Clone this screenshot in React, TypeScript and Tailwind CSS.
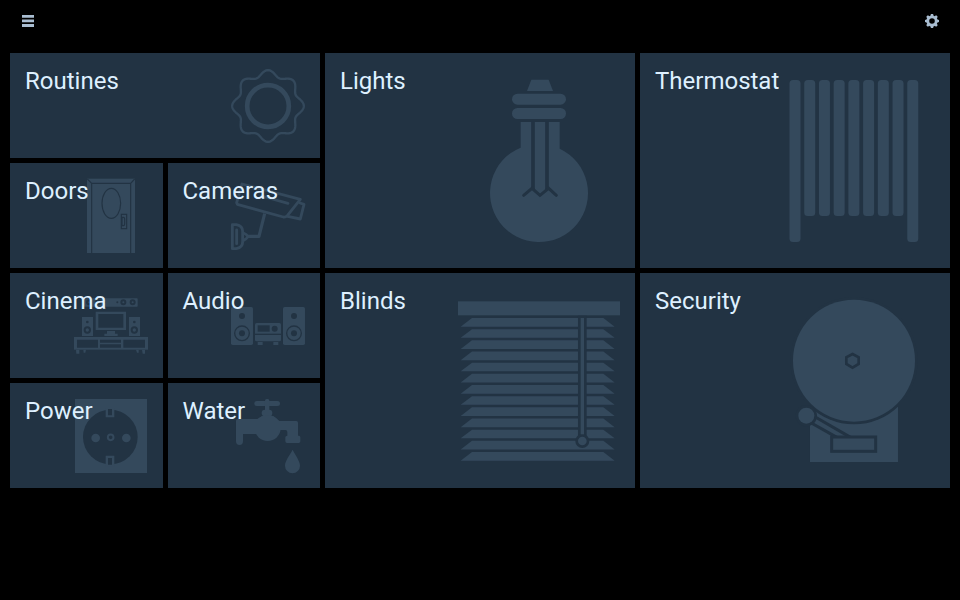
import type { ReactNode } from "react";

const DARK = "#223343";
const TINT = "#34495c";

const wave = (() => {
  const pts: string[] = [];
  for (let i = 0; i < 240; i++) {
    const a = (i / 240) * Math.PI * 2;
    const r = 98.5 + 9 * Math.cos(8 * a);
    pts.push(`${(144 + r * Math.cos(a)).toFixed(1)} ${(138 + r * Math.sin(a)).toFixed(1)}`);
  }
  return "M" + pts.join("L") + "Z";
})();

function Routines() {
  return (
    <g fill="none" stroke={TINT}>
      <circle cx="144" cy="138" r="62.500" strokeWidth="14" />
      <path d={wave} strokeWidth="7" />
    </g>
  );
}

function Door() {
  return (
    <g fill="none" stroke={DARK} strokeWidth="3.500">
      <rect x="51" y="41" width="144" height="223" fill={TINT} stroke="none" />
      <path d="M65 264V55H182V264M52 42L65 55M194 42L182 55" />
      <ellipse cx="124" cy="115" rx="28" ry="45" />
      <rect x="154" y="148" width="16" height="43" />
      <path d="M156 157H160Q164 157 164 162V177Q164 182 160 182H156Z" />
    </g>
  );
}

function Camera() {
  return (
    <g fill="none" stroke={TINT} strokeWidth="8.500" strokeLinejoin="round" strokeLinecap="round">
      <path d="M66 42L241 88L202 137Q197 142 190 141L52 103L50 98Z" />
      <path d="M125 78L204 100M240 99L252 103L241 147L203 139" />
      <path d="M134 131L117 199H80" strokeLinecap="butt" strokeWidth="9.500" />
      <path d="M37 164H49Q68 168 68 184V215Q68 232 49 236H37Z" />
      <path d="M50 180V221" />
      <path d="M70 189Q80 193 84 200Q80 207 70 211" />
    </g>
  );
}

function Cinema() {
  return (
    <g fill={TINT}>
      <rect x="72" y="40" width="161" height="25" rx="2" />
      <path fillRule="evenodd" d="M107 80H198V135H107ZM115 87V128H190V87Z" />
      <path d="M141 138H165V146H173V153H133V146H141Z" />
      <rect x="66" y="96" width="33" height="57" />
      <rect x="207" y="96" width="33" height="57" />
      <rect x="42" y="156" width="222" height="38" />
      <path d="M48 194H58V206H49ZM70 194H78L76 203H71ZM228 194H236V203H231ZM246 194H255V206H248Z" />
      <g fill={DARK}>
        <circle cx="82" cy="111" r="4" />
        <circle cx="223" cy="111" r="4" />
        <path d="M51 164H114V188H51ZM120 164H183V173H120ZM120 178H183V188H120ZM190 164H255V188H190Z" />
        <circle cx="172" cy="52" r="3" />
        <circle cx="133" cy="52" r="3" />
      </g>
      <g fill="none" stroke={DARK} strokeWidth="6">
        <circle cx="82" cy="135" r="8" />
        <circle cx="223" cy="135" r="8" />
        <circle cx="190" cy="52" r="6" />
        <circle cx="218" cy="52" r="6" />
        <circle cx="87" cy="52" r="6" />
        <circle cx="115" cy="52" r="6" />
      </g>
    </g>
  );
}

function Audio() {
  return (
    <g fill={TINT}>
      {[33, 189].map((x) => (
        <g key={x}>
          <rect x={x} y="51" width="66" height="114" rx="5" />
          <circle cx={x + 33} cy="78" r="9" fill={DARK} />
          <circle cx={x + 33} cy="130" r="9" fill={DARK} />
          <circle cx={x + 33} cy="130" r="22" fill="none" stroke={DARK} strokeWidth="4" />
        </g>
      ))}
      <rect x="105" y="99" width="78" height="55" rx="5" />
      <path d="M113 156H128V165H113ZM160 156H175V165H160Z" />
      <g fill={DARK}>
        <rect x="105" y="131" width="78" height="4" />
        <rect x="113" y="106" width="36" height="19" />
        <circle cx="164" cy="116" r="9" />
      </g>
    </g>
  );
}

function Power() {
  return (
    <g fill={TINT}>
      <rect x="30" y="27" width="216" height="222" />
      <circle cx="136" cy="141" r="82" fill={DARK} />
      <circle cx="92" cy="144" r="13" />
      <circle cx="184" cy="144" r="13" />
      <circle cx="137" cy="142" r="8.500" fill="none" stroke={TINT} strokeWidth="6" />
      <path d="M122 54H148V82H122ZM122 197H148V229H122Z" />
      <path d="M129 57H141V76H129ZM129 204H141V224H129Z" fill={DARK} />
    </g>
  );
}

function Water() {
  return (
    <g fill={TINT}>
      <rect x="88" y="33" width="77" height="15" rx="7.500" />
      <rect x="120" y="27" width="13" height="40" rx="5" />
      <rect x="110" y="59" width="32" height="20" rx="10" />
      <circle cx="128" cy="114" r="39" />
      <path d="M33 92Q33 87 38 87H97L110 79H146L163 93H214Q219 93 219 98V137H222Q226 137 226 142V154Q226 159 221 159H186Q181 159 181 154V142Q181 137 187 137V126Q187 120 181 120H160V132H54V154Q54 165 43.500 165Q33 165 33 154Z" />
      <path d="M203 179C210 195 225 212 225 227A22.500 22.500 0 0 1 180 227C180 212 195 195 203 179Z" />
    </g>
  );
}

function Bulb() {
  return (
    <g fill={TINT}>
      <path d="M154 44H206L219 78H141Z" />
      <rect x="96" y="86" width="162" height="33" rx="16.500" />
      <rect x="96" y="129" width="162" height="33" rx="16.500" />
      <path d="M122 171H239V251A147 147 0 1 1 122 248Z" />
      <g fill="none" stroke={DARK} strokeWidth="11">
        <path d="M159 170V374M201 170V374" />
        <path d="M131 391L156 370L180 391L206 370L229 391" strokeLinecap="round" strokeWidth="9" />
      </g>
    </g>
  );
}

function Radiator() {
  return (
    <g fill={TINT}>
      {[0, 1, 2, 3, 4, 5, 6, 7, 8].map((i) => (
        <rect key={i} x={789.5 + i * 14.72} y="80" width="11" height={i % 8 === 0 ? 162 : 136} rx="3.500" />
      ))}
    </g>
  );
}

function Blinds() {
  return (
    <g fill={TINT}>
      <rect x="24" y="34" width="486" height="42" />
      {[0, 1, 2, 3, 4, 5, 6, 7, 8, 9, 10, 11, 12].map((i) => (
        <path key={i} transform={`translate(0 ${i * 33.5})`} d="M66 84H460L494 110H32Z" />
      ))}
      <path d="M384 77H410V440H384Z" fill={DARK} />
      <circle cx="397" cy="453" r="21" fill={DARK} />
      <path d="M392 84H402V433H392Z" />
      <circle cx="397" cy="453" r="13" />
    </g>
  );
}

function Bell() {
  return (
    <g fill={TINT}>
      <path d="M90 350H354V516H90Z" />
      <circle cx="222" cy="212" r="191" fill={DARK} />
      <circle cx="222" cy="212" r="183" />
      <circle cx="79" cy="377" r="32" fill={DARK} />
      <path d="M94 399L172 443M106 381L213 443" fill="none" stroke={DARK} strokeWidth="9" />
      <circle cx="79" cy="377" r="24" />
      <rect x="155" y="441" width="132" height="43" stroke={DARK} strokeWidth="9" />
      <path d="M217.500 192L236 202V222L217.500 233L199 222V202Z" stroke={DARK} strokeWidth="8" />
    </g>
  );
}

type TileProps = {
  title: string;
  box: string;
  art: ReactNode;
  place?: string;
  span?: string;
};

function Tile({ title, box, art, place, span = "" }: TileProps) {
  return (
    <section className={`relative bg-[#223343] px-[15px] pt-3 ${span}`}>
      <svg className="absolute inset-0 h-full w-full" viewBox={box} aria-hidden="true">
        <g transform={place}>{art}</g>
      </svg>
      <h2 className="relative text-2xl leading-8 font-normal text-[#def0ff]">{title}</h2>
    </section>
  );
}

export default function App() {
  return (
    <main className="h-screen overflow-hidden bg-black px-2.5 font-['Roboto',sans-serif]">
      <header className="flex h-[53px] items-start justify-between px-3 pt-[14px] text-[#a9bdd1]">
        <svg width="12" height="14" viewBox="0 0 12 14" fill="currentColor" aria-label="Menu">
          <path d="M0 .9H12V3.700H0ZM0 5.500H12V8.300H0ZM0 10.100H12V12.900H0Z" />
        </svg>
        <svg className="-mr-[1px]" width="14" height="14" viewBox="-7 -7 14 14" fill="none" stroke="currentColor" aria-label="Settings">
          <circle r="4.200" strokeWidth="2.800" />
          {[0, 45, 90, 135].map((a) => (
            <path key={a} transform={`rotate(${a})`} d="M-1.700 -4.700L-1.100 -7H1.100L1.700 -4.700ZM-1.700 4.700L-1.100 7H1.100L1.700 4.700Z" fill="currentColor" stroke="none" />
          ))}
        </svg>
      </header>
      <div className="grid grid-cols-3 grid-rows-[215px_215px] gap-[5px]">
        <div className="grid grid-cols-2 grid-rows-2 gap-[5px]">
          <Tile title="Routines" span="col-span-2" box="10 53 310 105" place="translate(220 60) scale(.33333)" art={<Routines />} />
          <Tile title="Doors" box="10 163 152.5 105" place="translate(70 165) scale(.33333)" art={<Door />} />
          <Tile title="Cameras" box="168 163 152.5 105" place="translate(220 170) scale(.33333)" art={<Camera />} />
        </div>
        <Tile title="Lights" box="325 53 310 215" place="translate(480 65) scale(.33333)" art={<Bulb />} />
        <Tile title="Thermostat" box="640 53 310 215" art={<Radiator />} />
        <div className="grid grid-cols-2 grid-rows-2 gap-[5px]">
          <Tile title="Cinema" box="10 273 152.5 105" place="translate(60 285) scale(.33333)" art={<Cinema />} />
          <Tile title="Audio" box="168 273 152.5 105" place="translate(220 290) scale(.33333)" art={<Audio />} />
          <Tile title="Power" box="10 383 152.5 105" place="translate(65 390) scale(.33333)" art={<Power />} />
          <Tile title="Water" box="168 383 152.5 105" place="translate(225 390) scale(.33333)" art={<Water />} />
        </div>
        <Tile title="Blinds" box="325 273 310 215" place="translate(450 290) scale(.33333)" art={<Blinds />} />
        <Tile title="Security" box="640 273 310 215" place="translate(780 290) scale(.33333)" art={<Bell />} />
      </div>
    </main>
  );
}
